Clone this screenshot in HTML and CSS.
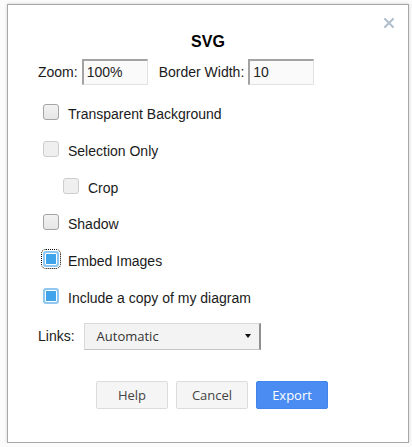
FILE: index.html
```html
<!DOCTYPE html>
<html>
<head>
<meta charset="utf-8">
<link rel="stylesheet" href="styles.css">
</head>
<body>
<div class="dialog">
  <svg class="close" width="10" height="10" viewBox="0 0 10 10"><path d="M1 1L9 9M9 1L1 9" stroke="#b3c0cf" stroke-width="2.2" stroke-linecap="square"/></svg>
  <div class="title">SVG</div>
  <div class="size-row">
    <span class="lbl">Zoom:</span>
    <span class="input">100%</span>
    <span class="lbl lbl-bw">Border Width:</span>
    <span class="input">10</span>
  </div>
  <div class="options">
    <div class="opt"><span class="cb"></span><span class="txt">Transparent Background</span></div>
    <div class="opt"><span class="cb disabled"></span><span class="txt">Selection Only</span></div>
    <div class="opt indent"><span class="cb disabled"></span><span class="txt">Crop</span></div>
    <div class="opt"><span class="cb"></span><span class="txt">Shadow</span></div>
    <div class="opt"><span class="cb checked focus"></span><span class="txt">Embed Images</span></div>
    <div class="opt"><span class="cb checked"></span><span class="txt">Include a copy of my diagram</span></div>
  </div>
  <div class="links-row">
    <span class="lbl">Links:</span>
    <div class="select"><span>Automatic</span><span class="arrow"></span></div>
  </div>
  <div class="buttons">
    <div class="btn">Help</div>
    <div class="btn">Cancel</div>
    <div class="btn primary">Export</div>
  </div>
</div>
</body>
</html>
```
FILE: styles.css
```css
html, body { margin: 0; padding: 0; background: #fbfbfb; }
body { padding: 4px 0 0 7px; font-family: "Liberation Sans", Arial, sans-serif; }
.dialog {
  position: relative;
  width: 340px;
  height: 437px;
  padding: 0 30px;
  background: #fff;
  border: 1px solid #a8a8a8;
  box-shadow: 0 0 3px rgba(0,0,0,0.18);
}
.close { position: absolute; top: 13px; right: 14px; }
.title {
  padding-top: 27px;
  text-align: center;
  font-size: 16px;
  font-weight: bold;
  line-height: 20px;
  color: #000;
}
.size-row { display: flex; align-items: center; margin-top: 7px; height: 26px; }
.lbl { font-size: 14px; color: #1a1a1a; }
.lbl-bw { margin-left: 11px; }
.input {
  box-sizing: border-box;
  width: 66px;
  height: 26px;
  margin-left: 4px;
  padding: 0 0 0 3px;
  font-size: 14px;
  line-height: 23px;
  color: #222;
  background: #fafafa;
  border-style: solid;
  border-width: 2px 1px 1px 2px;
  border-color: #a3a3a3 #e2e2e2 #e2e2e2 #a3a3a3;
}
.lbl-bw + .input { margin-left: 4px; }
.options { display: flex; flex-direction: column; gap: 16.8px; margin-top: 19px; }
.opt { display: flex; align-items: flex-start; height: 20px; padding-left: 5px; }
.opt.indent { padding-left: 25px; }
.txt { font-size: 14px; line-height: 20px; color: #1a1a1a; margin-left: 9px; }
.cb {
  box-sizing: border-box;
  width: 16px;
  height: 16px;
  flex: none;
  border: 1px solid #a4a4a4;
  border-radius: 3px;
  background: linear-gradient(#f2f2f2, #e6e6e6);
}
.cb.disabled { border-color: #cdcdcd; background: #efefef; }
.cb.checked {
  border: 2px solid #8ec8f2;
  border-radius: 3px;
  background: #3fa4ea;
  box-shadow: inset 0 0 0 1px #fff;
}
.cb.focus { outline: 1px dotted #000; outline-offset: 1px; }
.links-row { display: flex; align-items: center; margin-top: 15px; height: 27px; }
.select {
  box-sizing: border-box;
  display: flex;
  align-items: center;
  justify-content: space-between;
  width: 177px;
  height: 27px;
  margin-left: 9px;
  padding: 0 8px 0 12px;
  background: #f3f3f3;
  border: 1px solid #dadada;
  border-right: 2px solid #8f8f8f;
  border-bottom-color: #c4c4c4;
  font-family: "Open Sans", sans-serif;
  font-size: 13px;
  color: #333;
}
.arrow {
  width: 0; height: 0;
  border-left: 3px solid transparent;
  border-right: 3px solid transparent;
  border-top: 4px solid #111;
}
.buttons { display: flex; gap: 8px; margin-top: 31px; padding-left: 58px; }
.btn {
  box-sizing: border-box;
  width: 72px;
  height: 28px;
  display: flex;
  align-items: center;
  justify-content: center;
  font-family: "Open Sans", sans-serif;
  font-size: 13px;
  color: #444;
  background: #f5f5f5;
  border: 1px solid #dcdcdc;
  border-radius: 2px;
}
.btn.primary { background: #4a8cf2; border-color: #4284ee; color: #fff; }
```
